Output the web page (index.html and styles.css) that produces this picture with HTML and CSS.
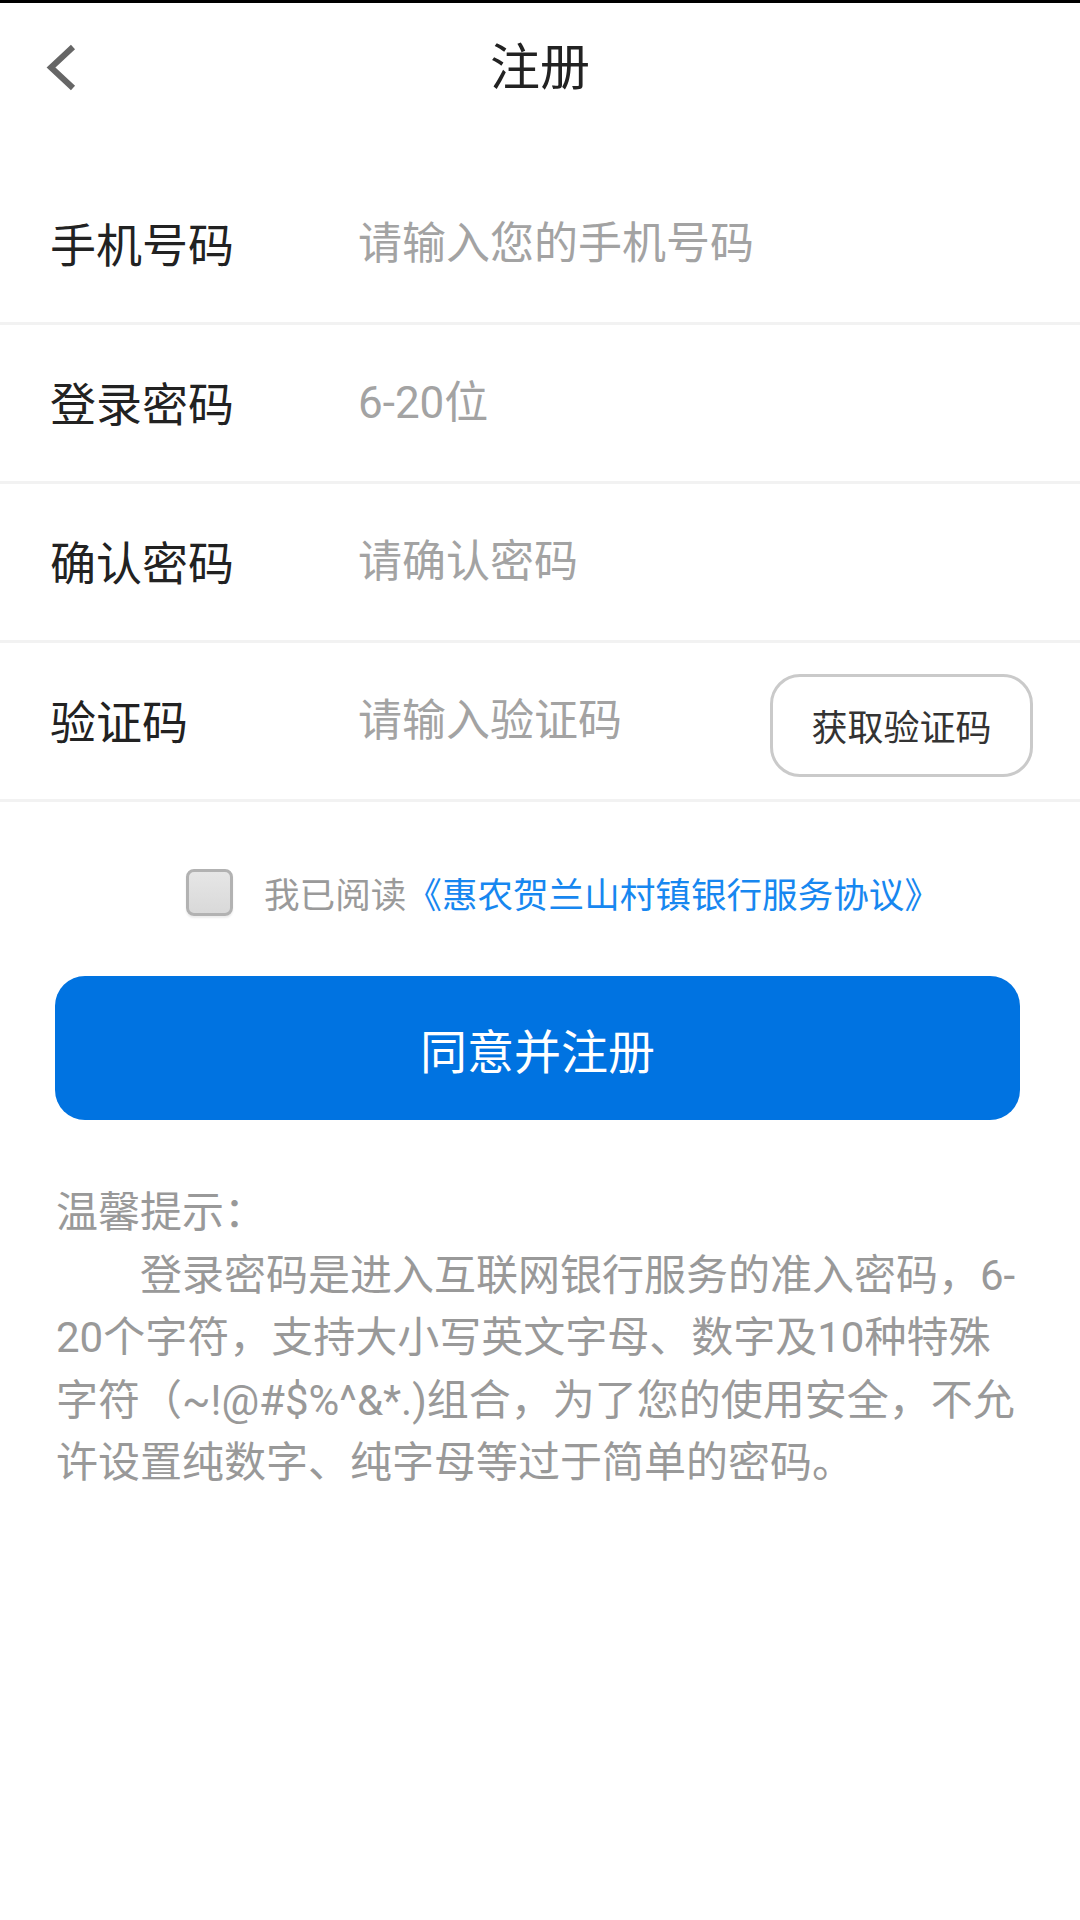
FILE: index.html
```html
<!DOCTYPE html>
<html lang="zh-CN">
<head>
<meta charset="utf-8">
<title>注册</title>
<link rel="stylesheet" href="styles.css">
</head>
<body>
<div class="page">
  <header class="topbar">
    <a class="back" href="#" aria-label="返回">
      <svg width="32" height="48" viewBox="0 0 32 48"><polyline points="27,3 5,23.5 27,44" fill="none" stroke="#666" stroke-width="6"/></svg>
    </a>
    <h1 class="title">注册</h1>
    <span class="spacer"></span>
  </header>

  <form class="form">
    <div class="row">
      <label class="label">手机号码</label>
      <input class="field" type="text" placeholder="请输入您的手机号码">
    </div>
    <div class="row">
      <label class="label">登录密码</label>
      <input class="field" type="password" placeholder="6-20位">
    </div>
    <div class="row">
      <label class="label">确认密码</label>
      <input class="field" type="password" placeholder="请确认密码">
    </div>
    <div class="row">
      <label class="label">验证码</label>
      <input class="field" type="text" placeholder="请输入验证码">
      <button type="button" class="code-btn">获取验证码</button>
    </div>
  </form>

  <div class="agree">
    <span class="checkbox"></span>
    <span class="agree-text">我已阅读<a class="link" href="#">《惠农贺兰山村镇银行服务协议》</a></span>
  </div>

  <button type="button" class="submit">同意并注册</button>

  <div class="tips">
    <p class="tips-title">温馨提示：</p>
    <p class="tips-body">登录密码是进入互联网银行服务的准入密码，6-<wbr>20个字符，支持大小写英文字母、数字及10种特殊字符（~!@#$%^&amp;*.)组合，为了您的使用安全，不允许设置纯数字、纯字母等过于简单的密码。</p>
  </div>
</div>
</body>
</html>
```
FILE: styles.css
```css
html, body {
  margin: 0;
  padding: 0;
  background: #fff;
}
body {
  width: 1080px;
  min-height: 1920px;
  border-top: 3px solid #000;
  box-sizing: border-box;
  font-family: Roboto, "Noto Sans CJK SC", sans-serif;
  color: #222;
}
.page {
  display: flex;
  flex-direction: column;
}
.topbar {
  height: 130px;
  display: grid;
  grid-template-columns: 1fr auto 1fr;
  align-items: center;
  padding: 0 46px;
}
.back {
  display: flex;
  width: 32px;
  height: 48px;
}
.title {
  margin: 0;
  font-size: 50px;
  font-weight: 400;
  color: #222;
  line-height: 1;
}
.form {
  margin-top: 33px;
  display: flex;
  flex-direction: column;
}
.row {
  height: 156px;
  border-bottom: 3px solid #f2f2f2;
  display: flex;
  align-items: center;
  padding: 0 47px 0 50px;
}
.label {
  flex: none;
  width: 308px;
  font-size: 46px;
  color: #222;
  margin-top: -4px;
}
.field {
  flex: 1;
  min-width: 0;
  border: none;
  outline: none;
  padding: 0;
  background: transparent;
  font-family: Roboto, "Noto Sans CJK SC", sans-serif;
  font-size: 44px;
  color: #333;
}
.field::placeholder {
  color: #a3a3a3;
}
.code-btn {
  flex: none;
  width: 263px;
  height: 103px;
  margin-top: 8px;
  border: 3px solid #cacaca;
  border-radius: 30px;
  background: #fff;
  font-family: Roboto, "Noto Sans CJK SC", sans-serif;
  font-size: 36px;
  color: #333;
  padding: 0;
}
.agree {
  margin-top: 65px;
  display: flex;
  align-items: center;
  justify-content: center;
  padding-left: 46px;
  gap: 31px;
}
.checkbox {
  flex: none;
  width: 41px;
  height: 41px;
  border: 3px solid #b2b2b2;
  border-radius: 8px;
  background: linear-gradient(#e6e6e6, #d9d9d9);
  box-shadow: 0 2px 2px rgba(0,0,0,0.08);
}
.agree-text {
  font-size: 35.6px;
  color: #9a9a9a;
}
.link {
  color: #1787f0;
  text-decoration: none;
}
.submit {
  margin: 58px 60px 0 55px;
  height: 144px;
  border: none;
  border-radius: 30px;
  background: #0073e1;
  color: #fff;
  font-family: Roboto, "Noto Sans CJK SC", sans-serif;
  font-size: 47px;
  padding: 0;
}
.tips {
  margin-top: 62px;
  padding: 0 56px;
  font-size: 42px;
  line-height: 62.5px;
  color: #999;
}
.tips p {
  margin: 0;
}
.tips-body {
  text-indent: 2em;
}
```
